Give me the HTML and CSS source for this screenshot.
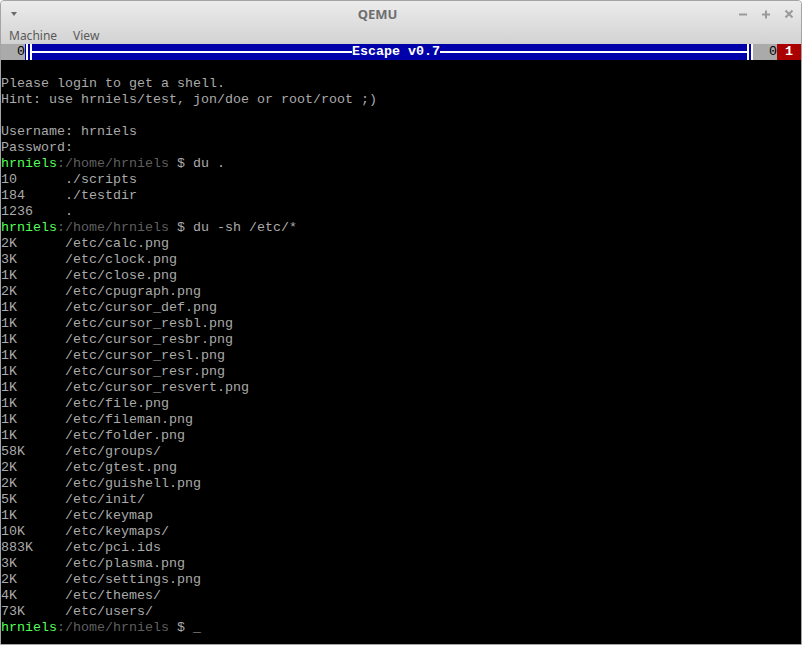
FILE: index.html
```html
<!DOCTYPE html>
<html>
<head>
<meta charset="utf-8">
<title>QEMU</title>
<link rel="stylesheet" href="styles.css">
</head>
<body>
<div class="window">
  <div class="header">
    <div class="titlebar">
      <div class="tb-left"><span class="tri"></span></div>
      <div class="tb-title">QEMU</div>
      <div class="tb-right">
        <svg width="10" height="10" viewBox="0 0 10 10"><path d="M1 5.5H9" stroke="#9a9a9a" stroke-width="2"/></svg>
        <svg width="10" height="10" viewBox="0 0 10 10"><path d="M1 5.5H9M5 1.5V9.5" stroke="#9a9a9a" stroke-width="2"/></svg>
        <svg width="10" height="10" viewBox="0 0 10 10"><path d="M1.5 1.5L8.5 8.5M8.5 1.5L1.5 8.5" stroke="#9a9a9a" stroke-width="2"/></svg>
      </div>
    </div>
    <div class="menubar">
      <span class="menu">Machine</span>
      <span class="menu">View</span>
    </div>
  </div>
  <div class="screen">
    <div class="status">
      <div class="cell gray w3"><span>0</span></div>
      <div class="dbl dbl-left"></div>
      <div class="bluebar"><span class="bt">Escape v0.7</span></div>
      <div class="dbl dbl-right"></div>
      <div class="cell gray w3"><span>0</span></div>
      <div class="cell red w3"><span class="one">1</span></div>
    </div>
<pre class="term">

Please login to get a shell.
Hint: use hrniels/test, jon/doe or root/root ;)

Username: hrniels
Password:
<span class="u">hrniels</span><span class="p">:/home/hrniels</span> $ du .
10      ./scripts
184     ./testdir
1236    .
<span class="u">hrniels</span><span class="p">:/home/hrniels</span> $ du -sh /etc/*
2K      /etc/calc.png
3K      /etc/clock.png
1K      /etc/close.png
2K      /etc/cpugraph.png
1K      /etc/cursor_def.png
1K      /etc/cursor_resbl.png
1K      /etc/cursor_resbr.png
1K      /etc/cursor_resl.png
1K      /etc/cursor_resr.png
1K      /etc/cursor_resvert.png
1K      /etc/file.png
1K      /etc/fileman.png
1K      /etc/folder.png
58K     /etc/groups/
2K      /etc/gtest.png
2K      /etc/guishell.png
5K      /etc/init/
1K      /etc/keymap
10K     /etc/keymaps/
883K    /etc/pci.ids
3K      /etc/plasma.png
2K      /etc/settings.png
4K      /etc/themes/
73K     /etc/users/
<span class="u">hrniels</span><span class="p">:/home/hrniels</span> $ _</pre>
  </div>
</div>
</body>
</html>
```
FILE: styles.css
```css
html, body {
  margin: 0;
  padding: 0;
  background: #ffffff;
}
.window {
  width: 802px;
  height: 645px;
  box-sizing: border-box;
  border: 1px solid #a4a4a4;
  border-radius: 4px 4px 0 0;
  overflow: hidden;
  display: flex;
  flex-direction: column;
  background: #d6d6d6;
}
.header {
  height: 43px;
  display: flex;
  flex-direction: column;
  background: linear-gradient(#ececec, #d2d2d2);
  font-family: "Noto Sans", "Open Sans", sans-serif;
}
.titlebar {
  height: 26px;
  display: flex;
  align-items: center;
}
.tb-left {
  width: 23px;
  display: flex;
  align-items: center;
  padding-left: 10px;
  box-sizing: border-box;
}
.tri {
  width: 0;
  height: 0;
  border-left: 3px solid transparent;
  border-right: 3px solid transparent;
  border-top: 4px solid #6a6a6a;
}
.tb-title {
  flex: 1;
  text-align: center;
  font-weight: bold;
  font-size: 13px;
  color: #6e6e6e;
}
.tb-right {
  width: 70px;
  display: flex;
  align-items: center;
  gap: 13px;
  padding-left: 7px;
  box-sizing: border-box;
}
.tb-right svg {
  display: block;
}
.menubar {
  height: 17px;
  display: flex;
  align-items: center;
  gap: 16px;
  padding-left: 8px;
  font-size: 12px;
  color: #5a5a5a;
  line-height: 17px;
}
.screen {
  width: 800px;
  height: 600px;
  background: #000000;
  font-family: "Liberation Mono", "DejaVu Sans Mono", monospace;
  font-size: 13.333px;
  line-height: 16px;
  color: #aaaaaa;
}
.status {
  height: 16px;
  display: flex;
}
.cell {
  height: 16px;
  display: flex;
  align-items: center;
}
.w3 {
  width: 24px;
}
.gray {
  background: #aaaaaa;
  color: #000000;
  justify-content: flex-end;
}
.red {
  background: #aa0000;
  color: #ffffff;
  font-weight: bold;
}
.one {
  padding-left: 8px;
}
.dbl {
  width: 8px;
  height: 16px;
  background-color: #0000aa;
}
.dbl-left {
  background-image:
    linear-gradient(#ffffff, #ffffff),
    linear-gradient(#ffffff, #ffffff),
    linear-gradient(#ffffff, #ffffff);
  background-size: 2px 16px, 2px 16px, 1px 2px;
  background-position: 1px 0, 5px 0, 7px 7px;
  background-repeat: no-repeat;
}
.dbl-right {
  background-image:
    linear-gradient(#ffffff, #ffffff),
    linear-gradient(#ffffff, #ffffff),
    linear-gradient(#ffffff, #ffffff);
  background-size: 2px 16px, 2px 16px, 2px 2px;
  background-position: 2px 0, 6px 0, 0 7px;
  background-repeat: no-repeat;
}
.bluebar {
  flex: 1;
  height: 16px;
  background: #0000aa linear-gradient(#ffffff, #ffffff) 0 7px / 100% 2px no-repeat;
  display: flex;
  align-items: center;
}
.bt {
  margin-left: 319px;
  background: #0000aa;
  color: #ffffff;
  font-weight: bold;
  line-height: 16px;
}
.term {
  margin: 0;
  font: inherit;
  line-height: 16px;
  color: #aaaaaa;
  white-space: pre;
}
.u {
  color: #55ff55;
}
.p {
  color: #5f5f5f;
}
```
